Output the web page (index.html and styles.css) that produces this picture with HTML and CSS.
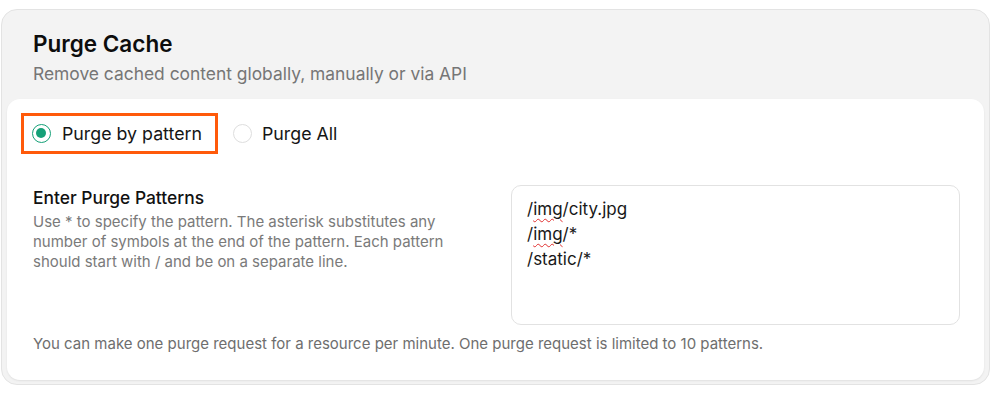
FILE: index.html
```html
<!DOCTYPE html>
<html>
<head>
<meta charset="utf-8">
<link rel="stylesheet" href="styles.css">
</head>
<body>
<section class="card">
  <header class="card-head">
    <h1 class="title">Purge Cache</h1>
    <p class="subtitle">Remove cached content globally, manually or via API</p>
  </header>
  <div class="card-body">
    <div class="radios">
      <label class="radio highlighted">
        <span class="dot checked"></span>
        <span class="radio-label">Purge by pattern</span>
      </label>
      <label class="radio">
        <span class="dot"></span>
        <span class="radio-label">Purge All</span>
      </label>
    </div>
    <div class="patterns">
      <div class="patterns-info">
        <h2 class="field-title">Enter Purge Patterns</h2>
        <p class="field-desc">Use * to specify the pattern. The asterisk substitutes any number of symbols at the end of the pattern. Each pattern should start with / and be on a separate line.</p>
      </div>
      <div class="textarea">
        <div class="line">/<span class="typo">img</span>/city.jpg</div>
        <div class="line">/<span class="typo">img</span>/*</div>
        <div class="line">/static/*</div>
      </div>
    </div>
    <p class="note">You can make one purge request for a resource per minute. One purge request is limited to 10 patterns.</p>
  </div>
</section>
</body>
</html>
```

FILE: styles.css
```css
* { box-sizing: border-box; }
html, body { margin: 0; padding: 0; background: #ffffff; }
body {
  font-family: Inter, "Noto Sans", sans-serif;
  color: #111;
  padding: 9px 11px 0 1px;
}
.card {
  background: #f3f3f3;
  border: 1px solid #e3e3e3;
  border-radius: 16px;
  padding: 0 5px 4px 5px;
  height: 376px;
  display: flex;
  flex-direction: column;
}
.card-head {
  padding: 19px 26px 0 26px;
  height: 89px;
}
.title {
  margin: 0;
  font-size: 22.5px;
  font-weight: 600;
  line-height: 30px;
  color: #0d0d0d;
}
.subtitle {
  margin: 4px 0 0 0;
  font-size: 17.4px;
  line-height: 22px;
  color: #767676;
}
.card-body {
  flex: 1;
  background: #fff;
  border-radius: 13px;
  box-shadow: 0 1px 2px rgba(0,0,0,0.08);
  padding: 14px 24px 0 14px;
}
.radios {
  display: flex;
  align-items: center;
  gap: 15px;
}
.radio {
  display: flex;
  align-items: center;
  gap: 11px;
  height: 41px;
  padding: 0 13px 0 8px;
  border: 3px solid transparent;
  font-size: 17.8px;
  color: #151515;
}
.radio.highlighted {
  border-color: #ff5a0a;
}
.radio:not(.highlighted) {
  padding-left: 0;
  border-width: 3px 0;
  gap: 10px;
}
.dot {
  width: 19px;
  height: 19px;
  border-radius: 50%;
  border: 1px solid #dedede;
  background: #fff;
  position: relative;
  flex: none;
}
.dot.checked {
  border: 1.5px solid #15a077;
}
.dot.checked::after {
  content: "";
  position: absolute;
  left: 3px;
  top: 3px;
  width: 10px;
  height: 10px;
  border-radius: 50%;
  background: #15a077;
}
.patterns {
  display: flex;
  justify-content: space-between;
  margin-top: 31px;
  padding-left: 12px;
}
.patterns-info {
  width: 440px;
  padding-top: 2px;
}
.field-title {
  margin: 0;
  font-size: 17.4px;
  font-weight: 500;
  line-height: 22px;
  color: #111;
}
.field-desc {
  margin: 3px 0 0 0;
  font-size: 15px;
  line-height: 20px;
  color: #7a7a7a;
}
.textarea {
  width: 449px;
  height: 140px;
  border: 1px solid #e2e2e2;
  border-radius: 10px;
  padding: 11px 15px;
  font-size: 17px;
  line-height: 25px;
  color: #181818;
}
.typo {
  text-decoration: underline wavy #e03030;
  text-decoration-thickness: 1px;
  text-underline-offset: 3px;
}
.note {
  margin: 9px 0 0 12px;
  font-size: 15px;
  line-height: 20px;
  color: #6e6e6e;
}
```
